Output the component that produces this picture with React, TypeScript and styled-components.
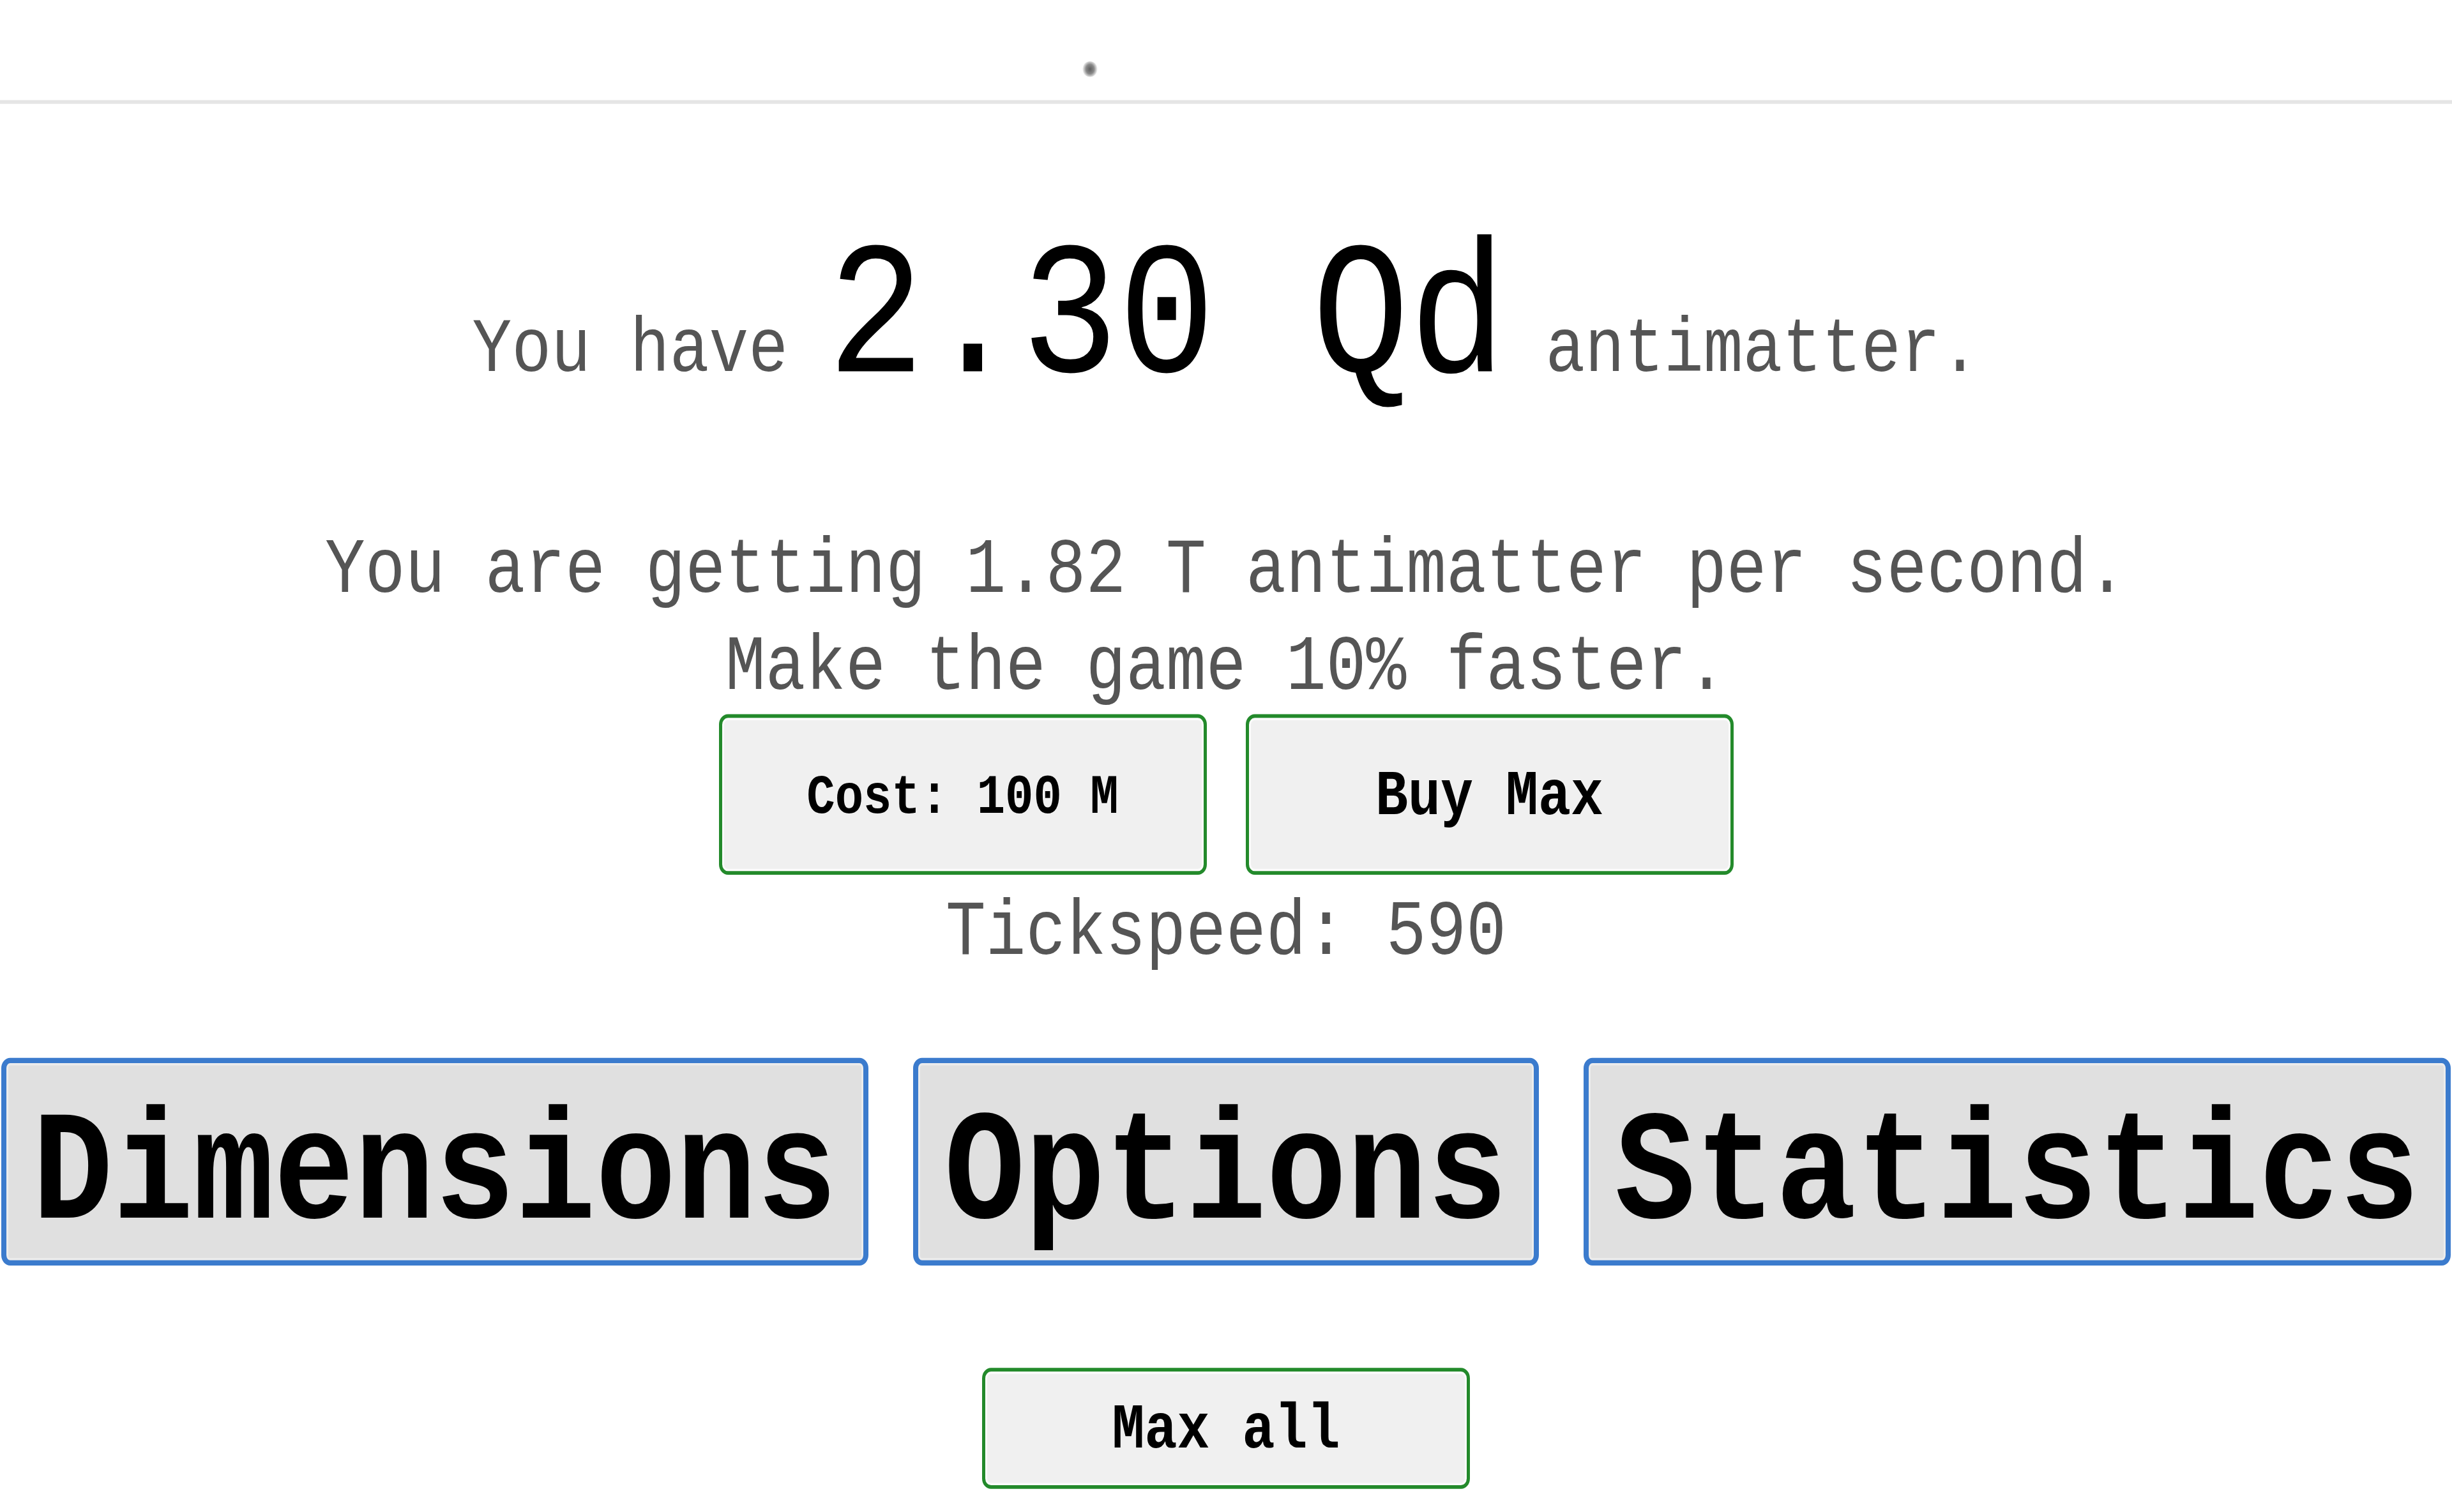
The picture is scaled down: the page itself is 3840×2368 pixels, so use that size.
import React from "react";
import styled, { createGlobalStyle } from "styled-components";

const GlobalStyle = createGlobalStyle`
  html, body {
    margin: 0;
    padding: 0;
    background: #ffffff;
  }
  body {
    font-family: "Liberation Mono", "DejaVu Sans Mono", monospace;
  }
`;

// keeps the page as tall as the window so the stretched stage is not cut off
const Page = styled.div`
  min-height: 100vh;
`;

// the capture is stretched vertically, so the page is scaled on Y as a whole
const Stage = styled.div`
  width: 100%;
  display: flex;
  flex-direction: column;
  align-items: center;
  transform: scaleY(1.17);
  transform-origin: top left;
`;

const Header = styled.header`
  align-self: stretch;
  box-sizing: border-box;
  height: 139px;
  padding: 82px 0 0 1695px;
  border-bottom: 5px solid #e5e5e5;
  display: flex;
  align-items: flex-start;
`;

const StatusDot = styled.span`
  width: 24px;
  height: 21px;
  border-radius: 50%;
  background: radial-gradient(
    circle,
    #5e5e5e 0%,
    #8a8a8a 40%,
    rgba(255, 255, 255, 0) 75%
  );
`;

const AmountLine = styled.div`
  margin-top: 164px;
  font-size: 103px;
  line-height: 1;
  color: #555555;
  white-space: pre;
  text-align: center;
`;

const Amount = styled.span`
  font-size: 253px;
  line-height: 1;
  color: #000000;
`;

const InfoLine = styled.div<{ $gap: number }>`
  margin-top: ${({ $gap }) => $gap}px;
  font-size: 104.5px;
  line-height: 124px;
  color: #555555;
  white-space: pre;
  text-align: center;
`;

const ButtonRow = styled.div`
  display: flex;
  gap: 61px;
`;

const GreenButton = styled.button<{ $size: number; $height: number; $pad?: number }>`
  box-sizing: border-box;
  width: 764px;
  height: ${({ $height }) => $height}px;
  padding: ${({ $pad }) => $pad ?? 8}px 0 0;
  display: flex;
  align-items: center;
  justify-content: center;
  border: 5px solid #238a2b;
  border-radius: 14px;
  background: #f0f0f0;
  box-shadow: inset 0 0 0 3px #fbfbfb;
  font-family: "Liberation Mono", "DejaVu Sans Mono", monospace;
  font-weight: bold;
  font-size: ${({ $size }) => $size}px;
  line-height: 1;
  color: #000000;
  white-space: pre;
`;

const TabRow = styled.nav`
  margin-top: 105px;
  display: flex;
  gap: 70px;
  justify-content: center;
`;

const TabButton = styled.button`
  box-sizing: border-box;
  height: 278px;
  padding: 38px 41px 0;
  display: flex;
  align-items: center;
  justify-content: center;
  border-style: solid;
  border-color: #3b7bcd;
  border-width: 7px 8px;
  border-radius: 14px;
  background: #e0e0e0;
  box-shadow: inset 0 0 0 3px #ececec;
  font-family: "Liberation Mono", "DejaVu Sans Mono", monospace;
  font-weight: bold;
  font-size: 210px;
  line-height: 1;
  color: #000000;
  white-space: pre;
`;

const MaxAllWrap = styled.div`
  margin-top: 137px;
`;

const tabs = ["Dimensions", "Options", "Statistics"];

const App: React.FC = () => (
  <Page>
    <GlobalStyle />
    <Stage>
      <Header>
        <StatusDot />
      </Header>
      <AmountLine>
        You have <Amount>2.30 Qd</Amount> antimatter.
      </AmountLine>
      <InfoLine $gap={146}>You are getting 1.82 T antimatter per second.</InfoLine>
      <InfoLine $gap={6}>Make the game 10% faster.</InfoLine>
      <ButtonRow>
        <GreenButton $size={74} $height={215}>
          Cost: 100 M
        </GreenButton>
        <GreenButton $size={85} $height={215}>
          Buy Max
        </GreenButton>
      </ButtonRow>
      <InfoLine $gap={16}>Tickspeed: 590</InfoLine>
      <TabRow>
        {tabs.map((tab) => (
          <TabButton key={tab}>{tab}</TabButton>
        ))}
      </TabRow>
      <MaxAllWrap>
        <GreenButton $size={85} $height={162} $pad={6}>
          Max all
        </GreenButton>
      </MaxAllWrap>
    </Stage>
  </Page>
);

export default App;
